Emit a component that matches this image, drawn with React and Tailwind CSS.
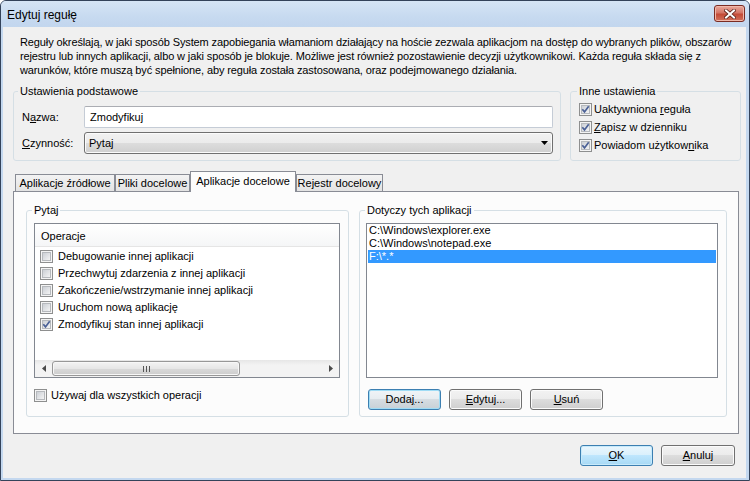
import React from "react";

const BTN =
  "h-[21px] rounded-[3px] border border-[#707070] bg-[linear-gradient(to_bottom,#f2f2f2_0%,#ebebeb_50%,#dddddd_50%,#cfcfcf_100%)] shadow-[inset_0_0_0_1px_#fbfbfb] flex items-center justify-center";
const BTN_FOCUS =
  "h-[21px] rounded-[3px] border border-[#3c7fb1] bg-[linear-gradient(to_bottom,#f0f4f7_0%,#e6ecf0_50%,#d6dde2_50%,#c8d0d6_100%)] shadow-[inset_0_0_0_1px_#9fdcf5] flex items-center justify-center";
const BTN_DEF =
  "h-[21px] rounded-[3px] border border-[#3c7fb1] bg-[linear-gradient(to_bottom,#eaf6fd_0%,#d9f0fc_50%,#bee6fd_50%,#a7d9f5_100%)] shadow-[inset_0_0_0_1px_#c7eafb] flex items-center justify-center";

function CheckBox({ checked }) {
  return (
    <svg width="13" height="13" viewBox="0 0 13 13" className="shrink-0 block">
      <defs>
        <linearGradient id="cbIn" x1="0" y1="0" x2="1" y2="1">
          <stop offset="0" stopColor="#c9cdd3" />
          <stop offset="1" stopColor="#f6f6f6" />
        </linearGradient>
      </defs>
      <rect x="0.5" y="0.5" width="12" height="12" fill="#f4f4f4" stroke="#8e8f8f" />
      <rect x="2.5" y="2.5" width="8" height="8" fill="url(#cbIn)" stroke="#b6b9bd" />
      {checked && (
        <path d="M3.3 6.2 L5.5 8.9 L9.7 3.2" fill="none" stroke="#4a6096" strokeWidth="1.7" />
      )}
    </svg>
  );
}

function Legend({ children, ml }) {
  return (
    <legend className={`${ml} px-[2px] leading-[14px] h-[14px] text-black`}>{children}</legend>
  );
}

export default function App() {
  return (
    <div className="w-[750px] h-[481px] flex flex-col border border-[#34435a] rounded-t-[6px] bg-[#c4d8ef] font-['Liberation_Sans',Arial,sans-serif] text-[11px] text-black overflow-hidden">
      {/* Title bar */}
      <div className="h-[26px] flex items-start pl-[6px] pr-[4px] bg-[linear-gradient(to_bottom,#d6e5f5_0%,#c7daf0_60%,#c2d6ee_100%)]">
        <span className="text-[12px] leading-[14px] mt-[7px]">Edytuj regułę</span>
        <div className="ml-auto mt-[4px] w-[31px] h-[17px] rounded-[3px] border border-[#7a2b22] bg-[linear-gradient(to_bottom,#e9a99b_0%,#d47566_45%,#c34a36_55%,#d2715c_100%)] shadow-[inset_0_0_0_1px_#f0b8aa] flex items-center justify-center">
          <svg width="12" height="10" viewBox="0 0 12 10">
            <path
              d="M2 1.5 L10 8.5 M10 1.5 L2 8.5"
              stroke="#5a2019"
              strokeWidth="3.6"
              strokeLinecap="square"
            />
            <path
              d="M2 1.5 L10 8.5 M10 1.5 L2 8.5"
              stroke="#ffffff"
              strokeWidth="2"
              strokeLinecap="square"
            />
          </svg>
        </div>
      </div>

      {/* Content */}
      <div className="flex-1 ml-[2px] mr-[3px] mb-[2px] bg-[#f0f0f0] flex flex-col pl-[10px] pr-[5px]">
        <div className="pl-[7px] pt-[8px] leading-[14px] whitespace-nowrap tracking-[-0.12px]">
          <div>
            Reguły określają, w jaki sposób System zapobiegania włamaniom działający na hoście zezwala aplikacjom na dostęp do wybranych plików, obszarów
          </div>
          <div>
            rejestru lub innych aplikacji, albo w jaki sposób je blokuje. Możliwe jest również pozostawienie decyzji użytkownikowi. Każda reguła składa się z
          </div>
          <div>
            warunków, które muszą być spełnione, aby reguła została zastosowana, oraz podejmowanego działania.
          </div>
        </div>

        {/* Group row */}
        <div className="mt-[7px] flex gap-[9px]">
          <fieldset className="w-[548px] h-[77px] border border-[#d5dfe5] rounded-[3px]">
            <Legend ml="ml-[4px]">Ustawienia podstawowe</Legend>
            <div className="pl-[8px] pr-[7px] pt-[8px] grid grid-cols-[62px_1fr] gap-y-[4px] items-center">
              <div>
                N<u>a</u>zwa:
              </div>
              <div className="h-[22px] bg-white border border-[#c5ccd6] border-t-[#abadb3] rounded-[2px] flex items-center pl-[5px]">
                Zmodyfikuj
              </div>
              <div>
                <u>C</u>zynność:
              </div>
              <div className={`${BTN} h-[22px] !justify-between pl-[4px] pr-[4px]`}>
                <span>Pytaj</span>
                <svg width="7" height="4" viewBox="0 0 7 4">
                  <path d="M0 0 L7 0 L3.5 4 Z" fill="#000" />
                </svg>
              </div>
            </div>
          </fieldset>

          <fieldset className="w-[171px] h-[77px] border border-[#d5dfe5] rounded-[3px]">
            <Legend ml="ml-[6px]">Inne ustawienia</Legend>
            <div className="pl-[8px] pt-[2px] flex flex-col">
              <div className="h-[18px] flex items-center gap-[2px]">
                <CheckBox checked />
                <span>
                  Uaktywniona <u>r</u>eguła
                </span>
              </div>
              <div className="h-[18px] flex items-center gap-[2px]">
                <CheckBox checked />
                <span>
                  <u>Z</u>apisz w dzienniku
                </span>
              </div>
              <div className="h-[18px] flex items-center gap-[2px]">
                <CheckBox checked />
                <span>
                  Powiadom użytkow<u>n</u>ika
                </span>
              </div>
            </div>
          </fieldset>
        </div>

        {/* Tabs */}
        <div className="mt-[10px] h-[21px] -mb-px flex items-end pl-[2px] relative z-10">
          <div className="w-[100px] h-[18px] border border-[#898c95] bg-[linear-gradient(to_bottom,#f3f3f3,#e3e3e3)] flex items-center justify-center">
            Aplikacje źródłowe
          </div>
          <div className="w-[75px] h-[18px] border border-[#898c95] bg-[linear-gradient(to_bottom,#f3f3f3,#e3e3e3)] flex items-center justify-center">
            Pliki docelowe
          </div>
          <div className="w-[106px] h-[21px] border border-b-0 border-[#898c95] bg-[#fcfcfc] flex items-center justify-center pb-[2px]">
            Aplikacje docelowe
          </div>
          <div className="w-[87px] h-[18px] border border-[#898c95] bg-[linear-gradient(to_bottom,#f3f3f3,#e3e3e3)] flex items-center justify-center">
            Rejestr docelowy
          </div>
        </div>

        {/* Tab panel */}
        <div className="mr-[2px] h-[243px] border border-[#898c95] bg-[#fcfcfc] pt-[11px] pl-[12px] flex gap-[10px]">
          {/* Pytaj */}
          <fieldset className="w-[323px] h-[214px] border border-[#d5dfe5] rounded-[3px]">
            <Legend ml="ml-[5px]">Pytaj</Legend>
            <div className="ml-[7px] mt-[6px] w-[306px] h-[155px] border border-[#828790] bg-white flex flex-col">
              <div className="h-[23px] border-b border-[#e5e5e5] bg-[linear-gradient(to_bottom,#ffffff,#f5f6f7)] flex items-center pl-[6px] pt-[2px]">
                Operacje
              </div>
              <div className="pt-[1px] flex flex-col">
                {[
                  ["Debugowanie innej aplikacji", false],
                  ["Przechwytuj zdarzenia z innej aplikacji", false],
                  ["Zakończenie/wstrzymanie innej aplikacji", false],
                  ["Uruchom nową aplikację", false],
                  ["Zmodyfikuj stan innej aplikacji", true],
                ].map(([t, c]) => (
                  <div key={t} className="h-[17px] flex items-center pl-[5px] gap-[5px] whitespace-nowrap">
                    <CheckBox checked={c} />
                    <span>{t}</span>
                  </div>
                ))}
              </div>
              <div className="flex-1" />
              {/* horizontal scrollbar */}
              <div className="h-[17px] flex items-center bg-[linear-gradient(to_bottom,#e6e6e6,#f3f3f3_30%,#f3f3f3)]">
                <div className="w-[17px] h-[17px] flex items-center justify-center">
                  <svg width="4" height="7" viewBox="0 0 4 7">
                    <path d="M4 0 L0 3.5 L4 7 Z" fill="#4a4a4a" />
                  </svg>
                </div>
                <div className="w-[188px] h-[15px] rounded-[3px] border border-[#979797] bg-[linear-gradient(to_bottom,#f3f3f3_0%,#e6e6e6_50%,#d9d9d9_51%,#cdcdcd_100%)] shadow-[inset_0_0_0_1px_#f7f7f7] flex items-center justify-center gap-[2px]">
                  <div className="w-px h-[6px] bg-[#555]" />
                  <div className="w-px h-[6px] bg-[#555]" />
                  <div className="w-px h-[6px] bg-[#555]" />
                </div>
                <div className="flex-1" />
                <div className="w-[17px] h-[17px] flex items-center justify-center">
                  <svg width="4" height="7" viewBox="0 0 4 7">
                    <path d="M0 0 L4 3.5 L0 7 Z" fill="#4a4a4a" />
                  </svg>
                </div>
              </div>
            </div>
            <div className="ml-[7px] mt-[9px] h-[17px] flex items-center gap-[4px]">
              <CheckBox />
              <span>Używaj dla wszystkich operacji</span>
            </div>
          </fieldset>

          {/* Dotyczy */}
          <fieldset className="w-[368px] h-[214px] border border-[#d5dfe5] rounded-[3px]">
            <Legend ml="ml-[5px]">Dotyczy tych aplikacji</Legend>
            <div className="ml-[6px] mt-[6px] w-[352px] h-[155px] border border-[#828790] bg-white flex flex-col">
              <div className="h-[13px] leading-[13px] mx-[1px] pl-[1px]">C:\Windows\explorer.exe</div>
              <div className="h-[13px] leading-[13px] mx-[1px] pl-[1px]">C:\Windows\notepad.exe</div>
              <div className="h-[13px] leading-[13px] mx-[1px] pl-[1px] bg-[#3399ff] text-white">F:\*.*</div>
            </div>
            <div className="ml-[8px] mt-[11px] flex gap-[8px]">
              <div className={`${BTN_FOCUS} w-[73px]`}>
                <span>
                  Doda<u>j</u>...
                </span>
              </div>
              <div className={`${BTN} w-[73px]`}>
                <span>
                  <u>E</u>dytuj...
                </span>
              </div>
              <div className={`${BTN} w-[73px]`}>
                <span>
                  <u>U</u>suń
                </span>
              </div>
            </div>
          </fieldset>
        </div>

        {/* Bottom buttons */}
        <div className="mt-[11px] mr-[6px] flex justify-end gap-[8px]">
          <div className={`${BTN_DEF} w-[73px]`}>
            <span>
              <u>O</u>K
            </span>
          </div>
          <div className={`${BTN} w-[74px]`}>
            <span>
              <u>A</u>nuluj
            </span>
          </div>
        </div>
      </div>
    </div>
  );
}
